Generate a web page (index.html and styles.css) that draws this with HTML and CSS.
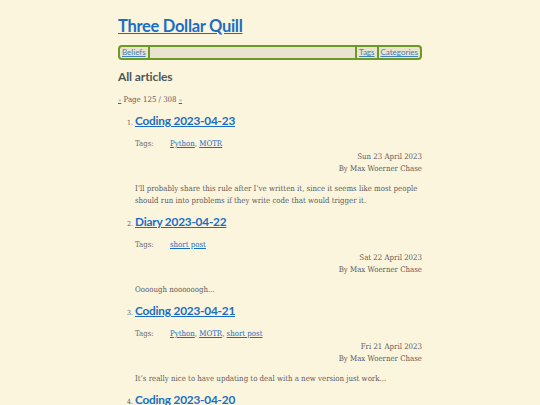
FILE: index.html
```
<!DOCTYPE html>
<html>
<head>
<meta charset="utf-8">
<link rel="stylesheet" href="styles.css">
</head>
<body>
<div class="page">
  <header class="site-header">
    <h1 class="site-title"><a href="#">Three Dollar Quill</a></h1>
    <nav class="nav">
      <a href="#" class="nav-item">Beliefs</a>
      <span class="nav-spacer"></span>
      <a href="#" class="nav-item">Tags</a>
      <a href="#" class="nav-item">Categories</a>
    </nav>
  </header>
  <main>
    <h2 class="section-title">All articles</h2>
    <p class="pager"><a href="#">«</a> Page 125 / 308 <a href="#">»</a></p>
    <ol class="articles" start="1">
      <li class="article">
        <h3 class="article-title"><a href="#">Coding 2023-04-23</a></h3>
        <div class="tags"><span class="tags-label">Tags:</span><span><a href="#">Python</a>, <a href="#">MOTR</a></span></div>
        <div class="meta"><div>Sun 23 April 2023</div><div>By Max Woerner Chase</div></div>
        <p class="summary">I’ll probably share this rule after I’ve written it, since it seems like most people should run into problems if they write code that would trigger it.</p>
      </li>
      <li class="article">
        <h3 class="article-title"><a href="#">Diary 2023-04-22</a></h3>
        <div class="tags"><span class="tags-label">Tags:</span><span><a href="#">short post</a></span></div>
        <div class="meta"><div>Sat 22 April 2023</div><div>By Max Woerner Chase</div></div>
        <p class="summary">Oooough noooooogh...</p>
      </li>
      <li class="article">
        <h3 class="article-title"><a href="#">Coding 2023-04-21</a></h3>
        <div class="tags"><span class="tags-label">Tags:</span><span><a href="#">Python</a>, <a href="#">MOTR</a>, <a href="#">short post</a></span></div>
        <div class="meta"><div>Fri 21 April 2023</div><div>By Max Woerner Chase</div></div>
        <p class="summary">It’s really nice to have updating to deal with a new version just work...</p>
      </li>
      <li class="article">
        <h3 class="article-title"><a href="#">Coding 2023-04-20</a></h3>
      </li>
    </ol>
  </main>
</div>
</body>
</html>
```
FILE: styles.css
```
html, body {
  margin: 0;
  padding: 0;
  background: #fcf5de;
}
body {
  font-family: "DejaVu Serif Condensed", "DejaVu Serif", serif;
  font-stretch: condensed;
  color: #5c5c5c;
  font-size: 7.8px;
  overflow: hidden;
  height: 405px;
}
a { color: #1a6ec2; }
.page {
  width: 304px;
  margin: 0 auto;
  padding-top: 14px;
}
.site-title {
  margin: 0;
  font-family: Lato, sans-serif;
  font-size: 16.5px;
  font-weight: 700;
  line-height: 24px;
  letter-spacing: -0.3px;
}
.site-title a { color: #1a6ec2; }
.nav {
  margin-top: 7px;
  display: flex;
  border: 2px solid #6b9a26;
  border-radius: 4px;
  background: #eae3cf;
  font-family: Lato, sans-serif;
  font-size: 8px;
  line-height: 11px;
}
.nav-item {
  padding: 0 2px;
  color: #4580b8;
}
.nav-spacer {
  flex: 1;
  border-left: 2px solid #6b9a26;
  border-right: 2px solid #6b9a26;
}
.nav-item + .nav-item { border-left: 2px solid #6b9a26; }
.section-title {
  margin: 8px 0 0;
  font-family: Lato, sans-serif;
  font-size: 12px;
  line-height: 18px;
  font-weight: 700;
  color: #4d5757;
  letter-spacing: -0.1px;
}
.pager {
  margin: 9px 0 0;
  font-size: 7.8px;
  line-height: 10px;
}
.pager a { font-size: 6px; }
.articles {
  margin: 7px 0 0;
  padding-left: 17px;
}
.article { font-size: 7px; }
.article-title {
  margin: 0;
  font-family: Lato, sans-serif;
  font-size: 11.8px;
  line-height: 18px;
  font-weight: 700;
  letter-spacing: -0.2px;
}
.tags {
  margin-top: 8px;
  display: flex;
  font-size: 7.8px;
  line-height: 12px;
}
.tags-label { width: 35px; color: #6a6a6a; }
.meta {
  margin-top: 1px;
  text-align: right;
  font-size: 7.8px;
  line-height: 12px;
}
.summary {
  margin: 8px 0 0;
  font-size: 7.8px;
  line-height: 12px;
}
.article + .article { margin-top: 6px; }
```
